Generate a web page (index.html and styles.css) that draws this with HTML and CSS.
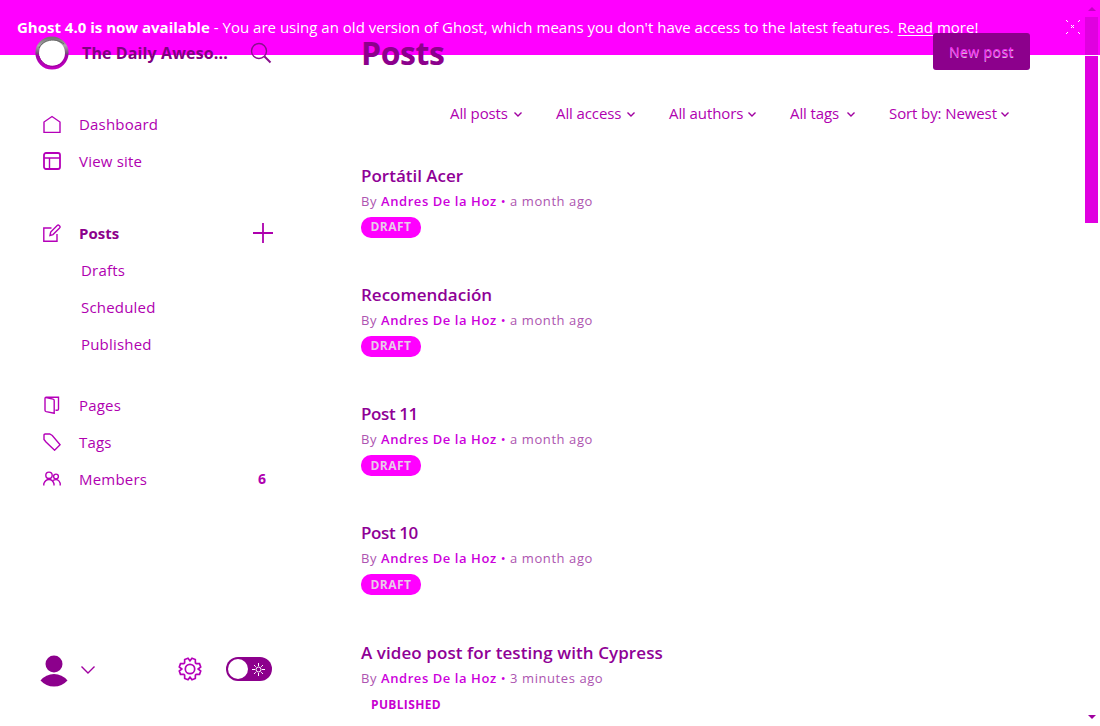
FILE: index.html
```html
<!DOCTYPE html>
<html lang="en">
<head>
<meta charset="utf-8">
<title>Posts - The Daily Awesome</title>
<link rel="stylesheet" href="styles.css">
</head>
<body>
<div class="banner">
  <p class="banner-text"><b class="banner-strong">Ghost 4.0 is now available</b><span class="banner-copy"> - You are using an old version of Ghost, which means you don't have access to the latest features. <a class="banner-link">Read</a> more!</span></p>
  <svg class="banner-close" width="14" height="14" viewBox="0 0 14 14"><path d="M0 .5h1M1 1.500h1M13 .5h1M12 1.500h1M0 13.500h1M1 12.500h1M13 13.500h1M12 12.500h1M5 5.500h1M7 5.500h1M6 6.500h1M5 7.500h1M7 7.500h1"/></svg>
</div>
<div class="app">
  <nav class="sidebar">
    <div class="brand">
      <svg class="logo" width="34" height="34" viewBox="0 0 34 34"><defs><linearGradient id="ring" x1="0" y1="0" x2="0" y2="1"><stop offset="0" stop-color="#777"/><stop offset=".25" stop-color="#aaa"/><stop offset=".52" stop-color="#76477a"/><stop offset=".58" stop-color="#a300a8"/><stop offset="1" stop-color="#c000c0"/></linearGradient></defs><circle cx="17" cy="17" r="14.800" fill="#fff" stroke="url(#ring)" stroke-width="3.600"/><path d="M4 12C8 4 20 1 29 8" fill="none" stroke="#666" stroke-width="1"/><path d="M4 20c3 10 15 14 24 6" fill="none" stroke="#980098" stroke-width="1"/></svg>
      <span class="site-name">The Daily Aweso...</span>
      <svg class="search" width="22" height="22" viewBox="0 0 22 22"><circle cx="9" cy="9" r="7.500"/><path class="handle" d="M14.500 14.500l6 6"/></svg>
    </div>
    <ul class="menu menu-top">
      <li class="item"><svg class="icon" viewBox="0 0 18 18"><path d="M1 17.500V7L9 1.500 17 7v10.500z"/></svg><span class="label">Dashboard</span></li>
      <li class="item"><svg class="icon" viewBox="0 0 18 18"><rect x="1" y="1" width="16" height="16" rx="2" stroke-width="1.800"/><path d="M1 6h16M6.500 6v11"/></svg><span class="label">View site</span></li>
    </ul>
    <ul class="menu menu-posts">
      <li class="item"><svg class="icon" viewBox="0 0 18 18"><path d="M8.500 4H.8v13.300H14V10M7 11.500l.7-3.400 6.500-6.600q1-.9 2.200.2t.2 2.200l-6.600 6.700z"/></svg><span class="label active">Posts</span><svg class="plus" width="20" height="20" viewBox="0 0 20 20"><path d="M10 0v20M0 10h20"/></svg></li>
      <li class="item sub"><span class="label">Drafts</span></li>
      <li class="item sub"><span class="label">Scheduled</span></li>
      <li class="item sub"><span class="label">Published</span></li>
    </ul>
    <ul class="menu menu-content">
      <li class="item"><svg class="icon" viewBox="0 0 18 18"><path d="M12.500 14.300h1.700q1.300 0 1.300-1.300V1.200H3.200Q2 1.200 2 2.500v11.700q0 1.100 1.200 1.400l8 1.700V4.500q0-1.100-1.200-1.400L3 1.500"/></svg><span class="label">Pages</span></li>
      <li class="item"><svg class="icon" viewBox="0 0 18 18"><path d="M1 6.500V2.200Q1 1 2.200 1h4.500l2.600 1.500 7.800 9.200-5.500 5.500L3 9z"/></svg><span class="label">Tags</span></li>
      <li class="item"><svg class="icon" viewBox="0 0 18 18"><circle cx="6" cy="5.300" r="3.200"/><circle cx="13" cy="6.500" r="2.400"/><path d="M.8 15.500v-1.700q1.400-4.300 5.200-4.300t5 4.300v1.700M10 10.300q5.500-2.300 7.200 3v2.200"/></svg><span class="label">Members</span><b class="count">6</b></li>
    </ul>
    <div class="account">
      <svg class="avatar" width="28" height="32" viewBox="0 0 28 32"><ellipse cx="14" cy="9" rx="8.500" ry="8.500"/><path d="M.5 25.500Q6 19 14 19t13.500 6.500Q22 31.500 14 31.500T.5 25.500z"/></svg>
      <svg class="account-arrow" width="14" height="8" viewBox="0 0 14 8"><path d="M.5.500L7 7 13.500.500"/></svg>
      <svg class="gear" width="24" height="24" viewBox="0 0 24 24"><circle cx="12" cy="12" r="4.700"/><path d="M12 3.800L14 1.300l3.300 1.200.1 3.300.8.800 3.300.1 1.200 3.300L20.200 12l2.500 2-1.200 3.300-3.300.1-.8.800-.1 3.300-3.300 1.200L12 20.200l-2 2.500-3.300-1.200-.1-3.300-.8-.8-3.300-.1L1.300 14l2.500-2-2.500-2 1.200-3.300 3.300-.1.800-.8.100-3.300L10 1.300z"/></svg>
      <svg class="toggle" width="46" height="24" viewBox="0 0 46 24"><rect width="46" height="24" rx="12" fill="#8c008c"/><circle cx="12" cy="12" r="10" fill="#fff"/><g fill="none" stroke="#fff"><circle cx="32.500" cy="12.500" r="2.500"/><path d="M32.500 6v3M32.500 16v3M26 12.500h3M36 12.500h3M28 8l1.800 1.800M35.200 15.200L37 17M28 17l1.800-1.800M35.200 9.800L37 8"/></g></svg>
    </div>
  </nav>
  <main class="main">
    <header class="heading"><h1 class="title">Posts</h1><a class="new-post"><span class="new-label">New post</span></a></header>
    <div class="filters">
      <span class="filter f-posts">All posts<svg class="caret" viewBox="0 0 8 5"><path d="M.5.500L4 4 7.500.500"/></svg></span>
      <span class="filter f-access">All access<svg class="caret" viewBox="0 0 8 5"><path d="M.5.500L4 4 7.500.500"/></svg></span>
      <span class="filter f-authors">All authors<svg class="caret" viewBox="0 0 8 5"><path d="M.5.500L4 4 7.500.500"/></svg></span>
      <span class="filter f-tags">All tags<svg class="caret" viewBox="0 0 8 5"><path d="M.5.500L4 4 7.500.500"/></svg></span>
      <span class="filter f-sort">Sort by: Newest<svg class="caret" viewBox="0 0 8 5"><path d="M.5.500L4 4 7.500.500"/></svg></span>
    </div>
    <section class="posts">
      <article class="post"><h2 class="post-title">Portátil Acer</h2><p class="meta">By <b>Andres De la Hoz</b> <i>•</i> a month ago</p><span class="badge">DRAFT</span></article>
      <article class="post"><h2 class="post-title">Recomendación</h2><p class="meta">By <b>Andres De la Hoz</b> <i>•</i> a month ago</p><span class="badge">DRAFT</span></article>
      <article class="post"><h2 class="post-title numbered">Post 11</h2><p class="meta">By <b>Andres De la Hoz</b> <i>•</i> a month ago</p><span class="badge">DRAFT</span></article>
      <article class="post"><h2 class="post-title numbered">Post 10</h2><p class="meta">By <b>Andres De la Hoz</b> <i>•</i> a month ago</p><span class="badge">DRAFT</span></article>
      <article class="post"><h2 class="post-title long">A video post for testing with Cypress</h2><p class="meta">By <b>Andres De la Hoz</b> <i>•</i> 3 minutes ago</p><span class="published">PUBLISHED</span></article>
    </section>
  </main>
  <aside class="scrollbar"><span class="arrow-up"></span><span class="thumb-top"></span><span class="thumb"></span><span class="arrow-down"></span></aside>
</div>
</body>
</html>
```
FILE: styles.css
```css
* { box-sizing: border-box; }
body { margin: 0; height: 726px; position: relative; overflow: hidden; background: #fff; color: #b000b0; font-family: "Open Sans", "Noto Sans", sans-serif; font-size: 15px; }
h1, h2, p, ul { margin: 0; padding: 0; }
ul { list-style: none; }
i { font-style: normal; }

/* The banner lies behind the app content. */
.banner { position: absolute; top: 0; left: 0; width: 1100px; height: 55px; background: #f0f; color: #fff; display: flex; justify-content: space-between; padding: 16px 20px 0 17px; }
.banner-text { font-size: 15px; line-height: 22px; white-space: nowrap; }
.banner-strong { font-weight: 700; letter-spacing: 0; }
.banner-copy { letter-spacing: .015px; }
.banner-link { text-decoration: underline; text-underline-offset: 2px; }
.banner-close { margin-top: 4px; stroke: #fff; }

.app { position: relative; display: flex; height: 726px; }
.sidebar { width: 320px; height: 726px; display: flex; flex-direction: column; }
.brand { height: 34px; margin: 36px 0 0 35px; display: flex; align-items: center; }
.site-name { width: 155px; margin-left: 13px; font-size: 16px; font-weight: 700; letter-spacing: .12px; color: #800080; line-height: 24px; white-space: nowrap; }
.search { margin-left: 13px; fill: none; stroke: #88108c; stroke-width: 1.4; }
.handle { stroke-width: 2; }

.menu-top { margin-top: 35px; }
.menu-posts { margin-top: 35px; }
.menu-content { margin-top: 24px; }
.item { height: 37px; padding-left: 43px; display: flex; align-items: center; }
.item.sub { padding-left: 81px; }
.icon { width: 18px; height: 18px; margin-right: 18px; fill: none; stroke: #b500b9; stroke-width: 1.4; }
.label { font-size: 15px; line-height: 24px; letter-spacing: .2px; white-space: nowrap; }
.active { font-weight: 700; letter-spacing: 0; color: #8c008c; }
.plus { margin-left: auto; margin-right: 47px; fill: none; stroke: #ad00ad; stroke-width: 1.8; }
.count { margin-left: auto; margin-right: 54px; font-size: 14px; }

.account { margin: auto 0 39px 40px; display: flex; align-items: center; height: 32px; }
.avatar { fill: #8c008c; }
.account-arrow { margin-left: 13px; margin-bottom: 3px; fill: none; stroke: #a000a0; stroke-width: 1.4; }
.gear { margin-left: 83px; margin-bottom: 4px; fill: none; stroke: #b500b9; stroke-width: 1.7; }
.toggle { margin-left: 24px; margin-bottom: 4px; }

.main { width: 765px; padding-left: 41px; }
.heading { height: 72px; padding-right: 55px; display: flex; justify-content: space-between; }
.title { margin-top: 33px; font-size: 32px; line-height: 40px; font-weight: 700; letter-spacing: -.4px; color: #8c008c; }
.new-post { width: 97px; height: 37px; margin-top: 33px; border-radius: 3px; background: #8c008c; display: flex; align-items: center; justify-content: center; }
.new-label { font-size: 14px; line-height: 20px; letter-spacing: .45px; color: #f22cf2; text-shadow: 0 1px #d6b9d6; white-space: nowrap; }
.filters { height: 42px; margin-top: 20px; padding-right: 76px; display: flex; justify-content: flex-end; gap: 34px; font-size: 15px; line-height: 42px; letter-spacing: -.1px; white-space: nowrap; }
.filter { display: flex; align-items: center; justify-content: space-between; }
.f-posts { width: 72px; }
.f-access { width: 79px; }
.f-authors { width: 87px; }
.f-tags { width: 65px; }
.f-sort { width: 120px; }
.caret { width: 8px; height: 5px; margin-top: 2px; flex: none; fill: none; stroke: #a000a0; stroke-width: 1.4; }

.posts { padding-top: 28.6px; }
.post { height: 119.3px; display: flex; flex-direction: column; align-items: flex-start; }
.post-title { font-size: 17px; line-height: 26px; font-weight: 600; color: #8f0096; white-space: nowrap; }
.post-title.numbered { letter-spacing: -.4px; }
.post-title.long { letter-spacing: .08px; }
.meta { font-size: 13px; line-height: 25px; letter-spacing: .57px; color: #ad54b0; white-space: nowrap; }
.meta b { font-weight: 600; color: #cc00dc; }
.meta i { color: #cc00dc; }
.badge { width: 60px; height: 21px; margin-top: 3px; display: flex; align-items: center; justify-content: center; border-radius: 10px; background: #f0f; color: #e9c9e9; font-size: 12px; font-weight: 700; line-height: 20px; letter-spacing: .5px; }
.published { margin: 4px 0 0 10px; color: #c800d0; font-size: 12px; line-height: 20px; font-weight: 700; letter-spacing: .35px; }

.scrollbar { width: 13px; height: 726px; display: flex; flex-direction: column; align-items: center; }
.arrow-up { margin-top: 7px; border: 4px solid transparent; border-top: 0; border-bottom-color: #c400c4; }
.thumb-top { width: 13px; height: 38px; margin-top: 6px; background: #e000e0; }
.thumb { width: 13px; height: 167px; margin-top: 1px; background: #e000e0; }
.arrow-down { margin: auto 0 7px; border: 4px solid transparent; border-bottom: 0; border-top-color: #a000a0; }
```
